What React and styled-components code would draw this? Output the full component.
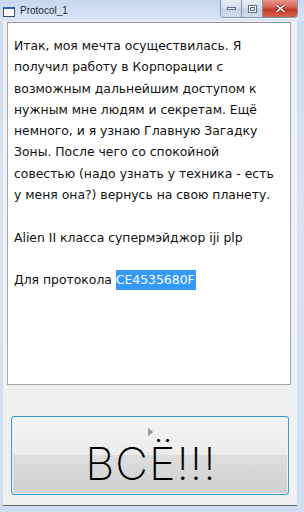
import React from 'react';
import styled, { createGlobalStyle } from 'styled-components';

const GlobalStyle = createGlobalStyle`
  html, body {
    margin: 0;
    padding: 0;
    background: #cddcee;
  }
  body {
    font-family: "DejaVu Sans", "Liberation Sans", sans-serif;
  }
`;

const protocolLines = [
    'Итак, моя мечта осуществилась. Я',
    'получил работу в Корпорации с',
    'возможным дальнейшим доступом к',
    'нужным мне людям и секретам. Ещё',
    'немного, и я узнаю Главную Загадку',
    'Зоны. После чего со спокойной',
    'совестью (надо узнать у техника - есть',
    'у меня она?) вернусь на свою планету.',
    '',
    'Alien II класса супермэйджор iji plp',
    '',
];

const Window = styled.div`
    width: 304px;
    height: 512px;
    display: flex;
    flex-direction: column;
    background: linear-gradient(to bottom, #c9daef 0%, #d7e4f4 40%, #cfdff1 100%);
    overflow: hidden;
`;

const TitleBar = styled.div`
    height: 21px;
    flex: none;
    display: flex;
    align-items: flex-start;
    background: linear-gradient(to bottom, #c6d8ee 0%, #dae6f4 100%);
`;

const TitleIcon = styled.div`
    margin: 7px 0 0 3px;
    width: 10px;
    height: 7px;
    border: 1px solid #3a4a5e;
    border-top-width: 2px;
    border-top-color: #2a62b8;
    background: #ffffff;
`;

const TitleText = styled.span`
    flex: 1;
    margin: 5px 0 0 5px;
    font-family: "Liberation Sans", "DejaVu Sans", sans-serif;
    font-size: 10px;
    color: #1e2a38;
`;

const Caption = styled.div`
    display: flex;
    margin-right: 6px;
    height: 17px;
    border: 1px solid #7f93ad;
    border-top: none;
    border-radius: 0 0 4px 4px;
    overflow: hidden;
    box-shadow: 0 1px 0 rgba(255, 255, 255, 0.7);
`;

const CaptionButton = styled.div`
    width: ${({ $w }) => $w}px;
    height: 17px;
    display: flex;
    align-items: center;
    justify-content: center;
    border-left: 1px solid #7f93ad;
    background: ${({ $bg }) => $bg};
    &:first-child {
        border-left: none;
    }
`;

const plainBg = 'linear-gradient(to bottom, #e4ecf6 0%, #d5e0ee 45%, #c2d2e6 55%, #cfdcec 100%)';
const closeBg = 'linear-gradient(to bottom, #e8988a 0%, #d65f4e 45%, #c43a29 55%, #d4624c 100%)';

const Client = styled.div`
    flex: 1;
    display: flex;
    flex-direction: column;
    margin: 0 7px 0 3px;
    padding: 1px 6px 9px 4px;
    background: #f0f0f0;
    border-bottom: 1px solid #5a6370;
`;

const FrameBottom = styled.div`
    height: 6px;
    flex: none;
`;

const TextPanel = styled.div`
    height: 363px;
    flex: none;
    background: #ffffff;
    border: 1px solid #a3a8b0;
    border-top-color: #8e949c;
    padding: 12px 6px 0 6px;
    box-sizing: border-box;
    font-family: "DejaVu Sans", "Liberation Sans", sans-serif;
    font-size: 12.4px;
    color: #111111;
    white-space: pre;
`;

const Line = styled.div`
    height: 21.3px;
    line-height: 21px;
`;

const Selected = styled.span`
    background: #3399ff;
    color: #ffffff;
    padding: 2px 1px 3px 0;
`;

const BigButton = styled.button`
    position: relative;
    margin: 31px 0 0 4px;
    width: 278px;
    height: 79px;
    flex: none;
    border: 1px solid #3c9bd0;
    border-radius: 3px;
    box-shadow: inset 0 0 0 1px #e8f4fa;
    background: linear-gradient(to bottom, #f3f3f3 0%, #ececec 49%, #dddddd 50%, #d0d0d0 100%);
    font-family: "Inter", "DejaVu Sans", sans-serif;
    font-weight: 200;
    font-size: 45px;
    letter-spacing: 1px;
    color: #000000;
    padding: 16px 0 0 2px;
    cursor: default;
`;

const Pointer = styled.svg`
    position: absolute;
    left: 136px;
    top: 11px;
`;

export default function App() {
    return (
        <>
            <GlobalStyle />
            <Window>
                <TitleBar>
                    <TitleIcon />
                    <TitleText>Protocol_1</TitleText>
                    <Caption>
                        <CaptionButton $w={20} $bg={plainBg}>
                            <svg width="9" height="3" viewBox="0 0 9 3">
                                <rect x="0.5" y="0.5" width="8" height="2" fill="#ffffff" stroke="#5d6f86" strokeWidth="1" />
                            </svg>
                        </CaptionButton>
                        <CaptionButton $w={20} $bg={plainBg}>
                            <svg width="9" height="8" viewBox="0 0 9 8">
                                <rect x="0.5" y="0.5" width="8" height="7" fill="#ffffff" stroke="#5d6f86" strokeWidth="1" />
                                <rect x="2.5" y="2.5" width="4" height="3" fill="#d8e2ee" stroke="#5d6f86" strokeWidth="1" />
                            </svg>
                        </CaptionButton>
                        <CaptionButton $w={34} $bg={closeBg}>
                            <svg width="11" height="9" viewBox="0 0 11 9">
                                <path d="M1.5 1 L9.5 8 M9.5 1 L1.5 8" stroke="#7a2a20" strokeWidth="3" />
                                <path d="M1.5 1 L9.5 8 M9.5 1 L1.5 8" stroke="#ffffff" strokeWidth="1.6" />
                            </svg>
                        </CaptionButton>
                    </Caption>
                </TitleBar>
                <Client>
                    <TextPanel>
                        {protocolLines.map((line, i) => (
                            <Line key={i}>{line}</Line>
                        ))}
                        <Line>
                            Для протокола <Selected>CE4535680F</Selected>
                        </Line>
                    </TextPanel>
                    <BigButton>
                        <Pointer width="5" height="8" viewBox="0 0 5 8">
                            <path d="M0.5 0.5 L4.5 4 L0.5 7.5 Z" fill="#9aa0a6" stroke="#6f757b" strokeWidth="0.6" />
                        </Pointer>
                        ВСЁ!!!
                    </BigButton>
                </Client>
                <FrameBottom />
            </Window>
        </>
    );
}
